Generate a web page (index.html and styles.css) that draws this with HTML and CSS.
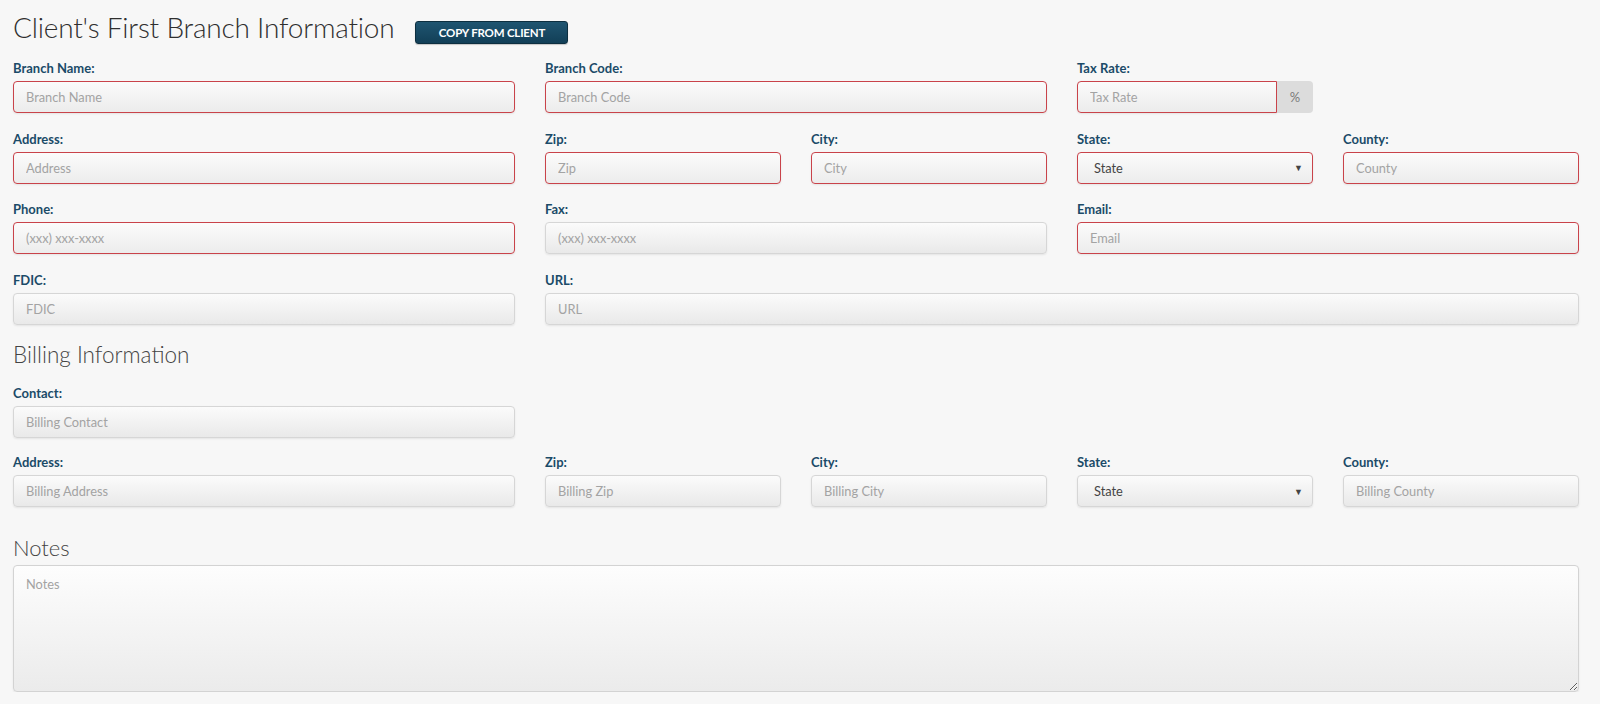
FILE: index.html
```html
<!DOCTYPE html>
<html>
<head>
<meta charset="utf-8">
<link rel="stylesheet" href="styles.css">
</head>
<body>
<div class="page">
  <div class="title-row">
    <h1 class="title">Client's First Branch Information</h1>
    <button class="btn-copy">COPY FROM CLIENT</button>
  </div>

  <div class="grid">
    <div class="field span2"><label>Branch Name:</label><input class="ctl req" placeholder="Branch Name"></div>
    <div class="field span2"><label>Branch Code:</label><input class="ctl req" placeholder="Branch Code"></div>
    <div class="field span1"><label>Tax Rate:</label>
      <div class="group"><input class="ctl req" placeholder="Tax Rate"><span class="addon">%</span></div>
    </div>
    <div class="field span1"></div>

    <div class="field span2"><label>Address:</label><input class="ctl req" placeholder="Address"></div>
    <div class="field span1"><label>Zip:</label><input class="ctl req" placeholder="Zip"></div>
    <div class="field span1"><label>City:</label><input class="ctl req" placeholder="City"></div>
    <div class="field span1"><label>State:</label><div class="ctl req select"><span>State</span><span class="caret">▼</span></div></div>
    <div class="field span1"><label>County:</label><input class="ctl req" placeholder="County"></div>

    <div class="field span2"><label>Phone:</label><input class="ctl req" placeholder="(xxx) xxx-xxxx"></div>
    <div class="field span2"><label>Fax:</label><input class="ctl" placeholder="(xxx) xxx-xxxx"></div>
    <div class="field span2"><label>Email:</label><input class="ctl req" placeholder="Email"></div>

    <div class="field span2"><label>FDIC:</label><input class="ctl" placeholder="FDIC"></div>
    <div class="field span4"><label>URL:</label><input class="ctl" placeholder="URL"></div>
  </div>

  <h2 class="section billing">Billing Information</h2>

  <div class="grid grid-b">
    <div class="field span2"><label>Contact:</label><input class="ctl" placeholder="Billing Contact"></div>
    <div class="field span4"></div>

    <div class="field span2"><label>Address:</label><input class="ctl" placeholder="Billing Address"></div>
    <div class="field span1"><label>Zip:</label><input class="ctl" placeholder="Billing Zip"></div>
    <div class="field span1"><label>City:</label><input class="ctl" placeholder="Billing City"></div>
    <div class="field span1"><label>State:</label><div class="ctl select"><span>State</span><span class="caret">▼</span></div></div>
    <div class="field span1"><label>County:</label><input class="ctl" placeholder="Billing County"></div>
  </div>

  <h2 class="section notes">Notes</h2>
  <textarea class="ctl notes-area" placeholder="Notes"></textarea>
</div>
</body>
</html>
```

FILE: styles.css
```css
html, body {
  margin: 0;
  padding: 0;
  background: #f7f7f7;
}
body {
  font-family: "Lato", "Open Sans", sans-serif;
  color: #333;
}
.page {
  width: 1566px;
  padding: 9px 0 0 13px;
}
.title-row {
  display: flex;
  align-items: center;
  height: 36px;
}
.title {
  margin: 0;
  font-size: 28px;
  font-weight: 300;
  line-height: 36px;
  color: #2f2f2f;
  letter-spacing: -0.2px;
}
.btn-copy {
  margin: 10px 0 0 21px;
  width: 153px;
  height: 23px;
  padding: 0;
  border: 1px solid #0d2f40;
  border-radius: 3px;
  background: linear-gradient(#1f5571, #123f57);
  color: #fff;
  font-family: "Lato", sans-serif;
  font-size: 11.5px;
  font-weight: 700;
  letter-spacing: -0.2px;
  box-shadow: 0 1px 1px rgba(0,0,0,0.2);
}
.grid {
  display: grid;
  grid-template-columns: repeat(6, 1fr);
  column-gap: 30px;
  row-gap: 15.5px;
  margin-top: 13px;
}
.grid-b {
  row-gap: 14.5px;
  margin-top: 13px;
}
.span1 { grid-column: span 1; }
.span2 { grid-column: span 2; }
.span4 { grid-column: span 4; }
.field label {
  display: block;
  font-size: 13px;
  font-weight: 700;
  line-height: 20px;
  height: 20px;
  margin-bottom: 3px;
  color: #1b4b68;
}
.ctl {
  display: block;
  box-sizing: border-box;
  width: 100%;
  height: 32px;
  margin: 0;
  padding: 0 12px;
  border: 1px solid #d6d6d6;
  border-radius: 4px;
  background: linear-gradient(#fbfbfb, #e9e9e9);
  box-shadow: 0 1px 2px rgba(0,0,0,0.08);
  font-family: "Lato", sans-serif;
  font-size: 12.8px;
  color: #555;
  outline: none;
}
.ctl::placeholder {
  color: #a3a3a3;
}
.ctl.req {
  border-color: #c9434a;
  background: linear-gradient(#fbfbfb, #ececec);
}
.group {
  display: flex;
}
.group .ctl {
  flex: 1;
  min-width: 0;
  border-radius: 4px 0 0 4px;
}
.addon {
  width: 36px;
  height: 32px;
  box-sizing: border-box;
  background: #dcdcdc;
  color: #7a7a7a;
  font-size: 13px;
  line-height: 32px;
  text-align: center;
  border-radius: 0 4px 4px 0;
}
.select {
  display: flex;
  align-items: center;
  justify-content: space-between;
  padding: 0 9px 0 16px;
  color: #444;
}
.caret {
  font-size: 9px;
  color: #444;
}
.section {
  margin: 0;
  font-weight: 300;
  font-size: 22.5px;
  line-height: 30px;
  color: #444;
}
.billing {
  margin-top: 15px;
}
.notes {
  margin-top: 25.5px;
  font-size: 22px;
}
.notes-area {
  margin-top: 2px;
  height: 127px;
  padding: 10px 12px;
  resize: vertical;
  background: linear-gradient(#fdfdfd, #ebebeb);
  border-color: #d3d3d3;
}
```
